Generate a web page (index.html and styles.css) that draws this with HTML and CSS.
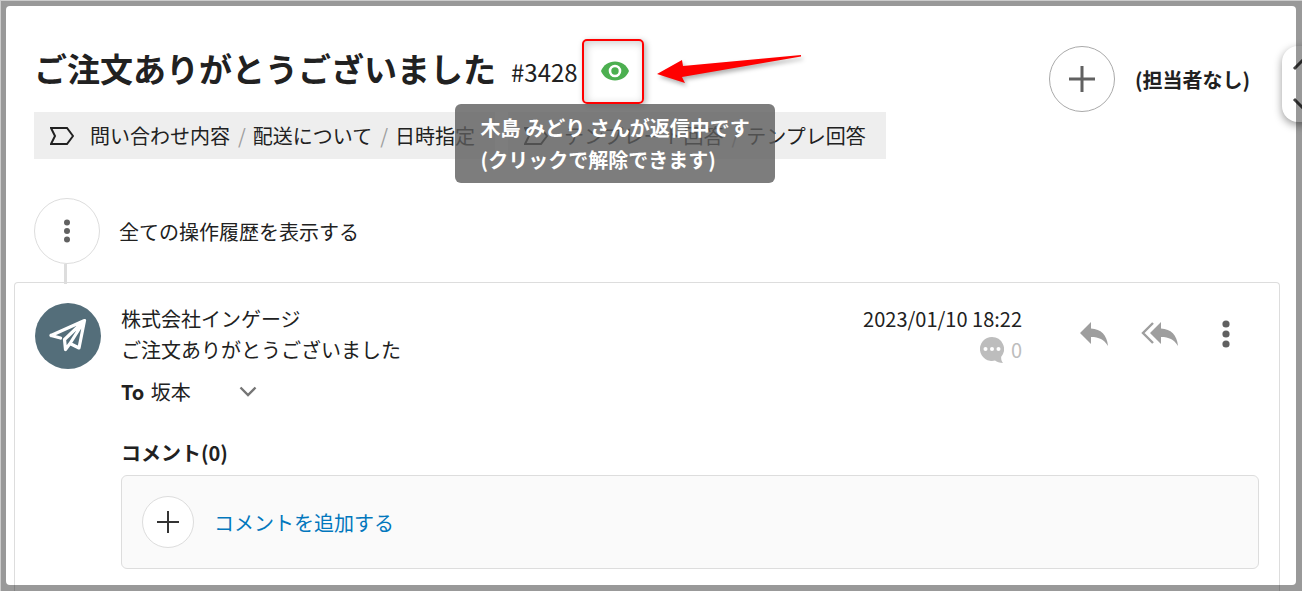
FILE: index.html
```html
<!DOCTYPE html>
<html lang="ja">
<head>
    <meta charset="UTF-8">
    <meta name="viewport" content="width=device-width, initial-scale=1.0">
    <title>ご注文ありがとうございました #3428</title>
    <link rel="stylesheet" href="styles.css">
</head>
<body>
    <div class="page">
        <header class="header">
            <div class="header-main">
                <div class="title-row">
                    <div class="title">
                        <h1>ご注文ありがとうございました</h1>
                        <span class="ticket-no">#3428</span>
                    </div>
                    <div class="watch">
                        <button class="eye" type="button" aria-describedby="eye-tip" aria-label="返信中">
                            <svg width="30" height="20" viewBox="0 0 30 20">
                                <path d="M1 10C3.500 4 8.500 0.500 15 0.500S26.500 4 29 10C26.500 16 21.500 19.500 15 19.500S3.500 16 1 10z" fill="#4caf50"/>
                                <circle cx="15" cy="10" r="5" fill="none" stroke="#fff" stroke-width="2.600"/>
                            </svg>
                        </button>
                        <svg class="arrow" width="160" height="48" viewBox="0 0 160 48">
                            <path d="M7 26L32 12L33 18L151 7V8.500L32 29L35 35z" fill="#f00"/>
                        </svg>
                        <div class="tooltip" id="eye-tip" role="tooltip">木島 みどり さんが返信中です<br>(クリックで解除できます)</div>
                    </div>
                </div>
                <div class="tags">
                    <div class="tag">
                        <svg width="24" height="18" viewBox="0 0 24 18"><path d="M1 1H17L23 9L17 17H1L5 9z"/></svg>
                        <p>問い合わせ内容<i>/</i>配送について<i>/</i>日時指定</p>
                    </div>
                    <div class="tag">
                        <svg width="24" height="18" viewBox="0 0 24 18"><path d="M1 1H17L23 9L17 17H1L5 9z"/></svg>
                        <p>テンプレート回答<i>/</i>テンプレ回答</p>
                    </div>
                </div>
            </div>
            <div class="assignee">
                <button class="circle circle-dark" type="button" aria-label="担当者を追加">
                    <svg width="26" height="26" viewBox="0 0 26 26"><path d="M13 0V26M0 13H26" stroke="#616161" stroke-width="3"/></svg>
                </button>
                <strong>(担当者なし)</strong>
            </div>
        </header>

        <div class="history">
            <button class="circle" type="button" id="history" aria-label="操作履歴">
                <svg width="6" height="24" viewBox="0 0 6 24" fill="#616161"><circle cx="3" cy="3.500" r="3"/><circle cx="3" cy="12" r="3"/><circle cx="3" cy="20.500" r="3"/></svg>
            </button>
            <label for="history">全ての操作履歴を表示する</label>
        </div>

        <article class="card">
            <div class="avatar">
                <svg width="38" height="34" viewBox="0 0 38 34">
                    <path d="M2 16.500L35.500 1.500L30 29L21 24.500L16.500 30.500L15.500 20.500L35.500 1.500L21 24.500M2 16.500L11.500 19" fill="none" stroke="#fff" stroke-width="3.200" stroke-linejoin="round" stroke-linecap="round"/>
                </svg>
            </div>
            <div class="content">
                <div class="mail-head">
                    <div class="mail-from">
                        <p>株式会社インゲージ</p>
                        <p>ご注文ありがとうございました</p>
                    </div>
                    <div class="mail-meta">
                        <time>2023/01/10 18:22</time>
                        <div class="count">
                            <svg width="24" height="26" viewBox="0 0 24 26">
                                <path d="M12 0A12 12 0 1 0 15 23.600C17 25 19.500 26 23 26C21.500 24 21 22 21.200 19.700A12 12 0 0 0 12 0z" fill="#bdbdbd"/>
                                <circle cx="5.500" cy="12" r="2" fill="#fff"/><circle cx="12" cy="12" r="2" fill="#fff"/><circle cx="18.500" cy="12" r="2" fill="#fff"/>
                            </svg>
                            <span>0</span>
                        </div>
                    </div>
                    <div class="actions">
                        <button type="button" aria-label="返信">
                            <svg width="30" height="24" viewBox="0 0 30 24"><path d="M1 11L12 0V6.500C22 7 28 13 29 24C25 17.500 20 15 12 15V22z" fill="#9e9e9e"/></svg>
                        </button>
                        <button type="button" aria-label="全員に返信">
                            <svg width="38" height="24" viewBox="0 0 38 24"><path d="M9 11L20 0V6.500C30 7 36 13 37 24C33 17.500 28 15 20 15V22z" fill="#9e9e9e"/><path d="M12 1L2 11L12 21" fill="none" stroke="#9e9e9e" stroke-width="2.400"/></svg>
                        </button>
                        <button type="button" aria-label="メニュー">
                            <svg width="8" height="28" viewBox="0 0 8 28" fill="#616161"><circle cx="4" cy="4" r="3.600"/><circle cx="4" cy="14" r="3.600"/><circle cx="4" cy="24" r="3.600"/></svg>
                        </button>
                    </div>
                </div>
                <div class="to">
                    <p><b>To</b> 坂本</p>
                    <button type="button" aria-label="宛先を開く">
                        <svg width="18" height="11" viewBox="0 0 18 11"><path d="M1.500 1.500L9 9L16.500 1.500" fill="none" stroke="#757575" stroke-width="2.400"/></svg>
                    </button>
                </div>
                <h2>コメント(0)</h2>
                <div class="comment-box">
                    <button class="circle circle-small" type="button" aria-label="追加">
                        <svg width="22" height="22" viewBox="0 0 22 22"><path d="M11 0V22M0 11H22" stroke="#333" stroke-width="2"/></svg>
                    </button>
                    <a href="#comment">コメントを追加する</a>
                </div>
            </div>
        </article>

        <nav class="pager">
            <button type="button" aria-label="前へ"><svg width="20" height="12" viewBox="0 0 20 12"><path d="M2 10L10 2L18 10"/></svg></button>
            <button type="button" aria-label="次へ"><svg width="20" height="12" viewBox="0 0 20 12"><path d="M2 2L10 10L18 2"/></svg></button>
        </nav>
    </div>
    <div class="frame"></div>
</body>
</html>
```

FILE: styles.css
```css
* {
    box-sizing: border-box;
}
body {
    margin: 0;
    overflow: hidden;
    background-color: white;
    color: #212121;
    font-family: "Noto Sans CJK JP", sans-serif;
    font-size: 20px;
    line-height: 31px;
}
h1, h2, p {
    margin: 0;
}
button {
    display: flex;
    align-items: center;
    justify-content: center;
    padding: 0;
    border: none;
    background: none;
    cursor: pointer;
}
svg {
    display: block;
    flex: none;
}

.page {
    display: flex;
    flex-direction: column;
    position: relative;
    min-height: 100vh;
    padding: 39px 22px 0 14px;
}

/* header */
.header {
    display: flex;
    justify-content: space-between;
    padding: 0 30px 0 20px;
}
.title-row {
    display: flex;
    align-items: center;
    gap: 4px;
    margin-bottom: 8px;
}
.title {
    display: flex;
    align-items: baseline;
    gap: 15px;
    padding-bottom: 7px;
}
h1 {
    font-size: 33px;
    line-height: 58px;
}
.ticket-no {
    font-size: 24px;
}
.watch {
    position: relative;
}
.eye {
    width: 62px;
    height: 65px;
    padding: 0 0 2px 4px;
    border: 2px solid #f00;
    border-radius: 5px;
    box-shadow: 2px 2px 6px rgba(0, 0, 0, 0.3), inset 2px 2px 8px rgba(0, 0, 0, 0.2);
}
.arrow {
    position: absolute;
    top: 9px;
    left: 68px;
    filter: drop-shadow(2px 3px 2px rgba(0, 0, 0, 0.3));
}
.tooltip {
    position: absolute;
    top: 65px;
    left: -127px;
    z-index: 2;
    padding: 8px 25px 7px 26px;
    border-radius: 6px;
    background-color: rgba(92, 92, 92, 0.8);
    color: white;
    font-weight: bold;
    line-height: 32px;
    white-space: nowrap;
}
.tags {
    display: flex;
    gap: 13px;
}
.tag {
    display: flex;
    align-items: center;
    gap: 16px;
    padding: 8px 20px 8px 16px;
    background-color: #eee;
    white-space: nowrap;
}
.tag path {
    fill: none;
    stroke: #212121;
    stroke-width: 2;
}
.tag i {
    margin: 0 7px 0 8px;
    color: #9e9e9e;
    font-style: normal;
}
.assignee {
    display: flex;
    align-items: center;
    align-self: flex-start;
    gap: 20px;
    padding-top: 7px;
}
.circle {
    width: 66px;
    height: 66px;
    flex: none;
    border: 1px solid #ddd;
    border-radius: 50%;
    background-color: white;
}
.circle-dark {
    border-color: #aaa;
}
.circle-small {
    width: 52px;
    height: 52px;
}

/* history */
.history {
    display: flex;
    align-items: center;
    gap: 19px;
    position: relative;
    padding: 39px 20px 18px;
}
.history::after {
    content: "";
    position: absolute;
    bottom: -2px;
    left: 50px;
    width: 3px;
    height: 20px;
    background-color: #ddd;
}

/* mail */
.card {
    display: flex;
    flex: 1;
    gap: 20px;
    padding: 20px 20px 0;
    border: 1px solid #ddd;
    border-bottom: none;
    border-radius: 4px 4px 0 0;
}
.avatar {
    display: flex;
    align-items: center;
    justify-content: center;
    width: 66px;
    height: 66px;
    flex: none;
    border-radius: 50%;
    background-color: #546e7a;
}
.content {
    flex: 1;
}
.mail-head {
    display: flex;
}
.mail-from {
    flex: 1;
}
.mail-meta {
    margin-right: 39px;
}
.count {
    display: flex;
    align-items: center;
    justify-content: flex-end;
    gap: 7px;
    color: #bdbdbd;
}
.actions {
    display: flex;
}
.actions button {
    width: 66px;
    height: 62px;
}
.to {
    display: flex;
    gap: 48px;
    margin-top: 11px;
}
.to b {
    margin-right: 2px;
}
h2 {
    margin: 30px 0 7px;
    font-size: 20px;
}
.comment-box {
    display: flex;
    align-items: center;
    gap: 20px;
    padding: 20px;
    border: 1px solid #ddd;
    border-radius: 6px;
    background-color: #fafafa;
}
.comment-box a {
    color: #0277bd;
    text-decoration: none;
}

/* previous / next tab on the right edge */
.pager {
    display: flex;
    flex-direction: column;
    justify-content: space-between;
    position: absolute;
    top: 46px;
    right: -20px;
    width: 40px;
    height: 76px;
    padding: 13px 8px;
    border-radius: 16px;
    background-color: white;
    box-shadow: 0 3px 8px rgba(0, 0, 0, 0.4);
}
.pager path {
    fill: none;
    stroke: #424242;
    stroke-width: 3;
}

/* shaded frame over the window edges */
.frame {
    position: fixed;
    inset: 6px;
    z-index: 3;
    border-radius: 4px;
    box-shadow: 0 0 0 20px rgba(0, 0, 0, 0.4);
    pointer-events: none;
}
.frame::before {
    content: "";
    position: fixed;
    inset: 0;
    border-top: 1px solid rgba(255, 255, 255, 0.5);
    border-left: 1px solid rgba(255, 255, 255, 0.5);
}
```
